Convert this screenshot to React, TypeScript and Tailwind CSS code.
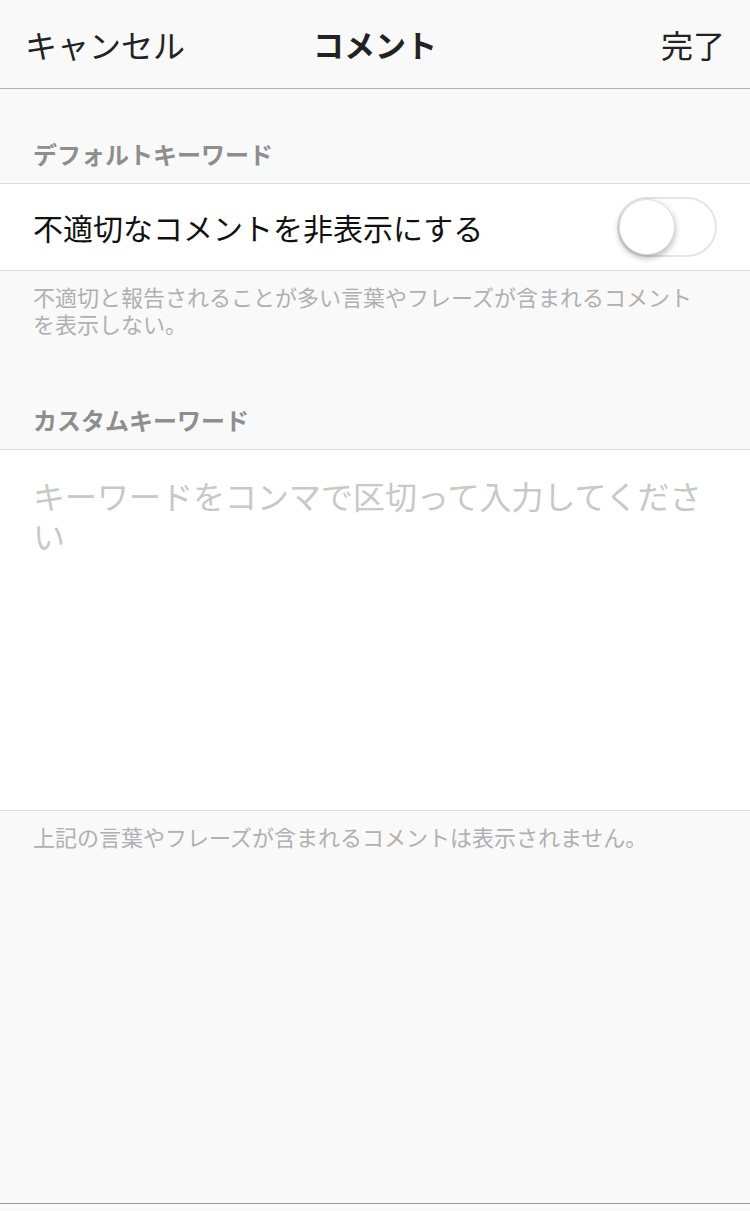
export default function App() {
  const font = { fontFamily: '"Noto Sans CJK JP", "Noto Sans", sans-serif' };
  return (
    <div className="w-[750px] h-[1211px] bg-[#f9f9f9] flex flex-col" style={font}>
      {/* Nav bar */}
      <div className="h-[89px] flex items-center justify-between px-[25px] border-b border-[#b2b2b2] bg-[#f9f9f9]">
        <span className="text-[32px] text-[#222] w-[200px]">キャンセル</span>
        <span className="text-[31px] font-bold text-[#222]">コメント</span>
        <span className="text-[32px] text-[#222] w-[200px] text-right">完了</span>
      </div>

      {/* Default keywords */}
      <div className="h-[95px] flex items-end px-[33px] pb-[11px] text-[24px] font-bold text-[#8e8e8e] border-b border-[#dcdcdc]">
        デフォルトキーワード
      </div>
      <div className="h-[87px] bg-white flex items-center justify-between px-[33px] border-b border-[#dcdcdc]">
        <span className="text-[30px] text-[#111]">不適切なコメントを非表示にする</span>
        <div className="w-[100px] h-[60px] rounded-full border-2 border-[#e5e5e5] bg-white relative">
          <div className="absolute left-0 top-0 w-[56px] h-[56px] rounded-full bg-white shadow-[0_3px_6px_rgba(0,0,0,0.3)] border border-[#ddd]" />
        </div>
      </div>
      <div className="pl-[33px] pr-[40px] pt-[12px] text-[22px] leading-[27px] text-[#b0b0b0]">
        不適切と報告されることが多い言葉やフレーズが含まれるコメントを表示しない。
      </div>

      {/* Custom keywords */}
      <div className="h-[113px] flex items-end px-[33px] pb-[11px] text-[24px] font-bold text-[#8e8e8e] border-b border-[#dcdcdc]">
        カスタムキーワード
      </div>
      <div className="h-[361px] bg-white border-b border-[#dcdcdc] pl-[33px] pr-[30px] pt-[25px]">
        <p className="text-[32px] leading-[40px] text-[#c8c8c8]">キーワードをコンマで区切って入力してください</p>
      </div>
      <div className="px-[33px] pt-[12px] text-[22px] leading-[27px] text-[#b0b0b0]">
        上記の言葉やフレーズが含まれるコメントは表示されません。
      </div>

      <div className="flex-1" />
      <div className="h-[8px] border-t border-[#9a9a9a]" />
    </div>
  );
}
